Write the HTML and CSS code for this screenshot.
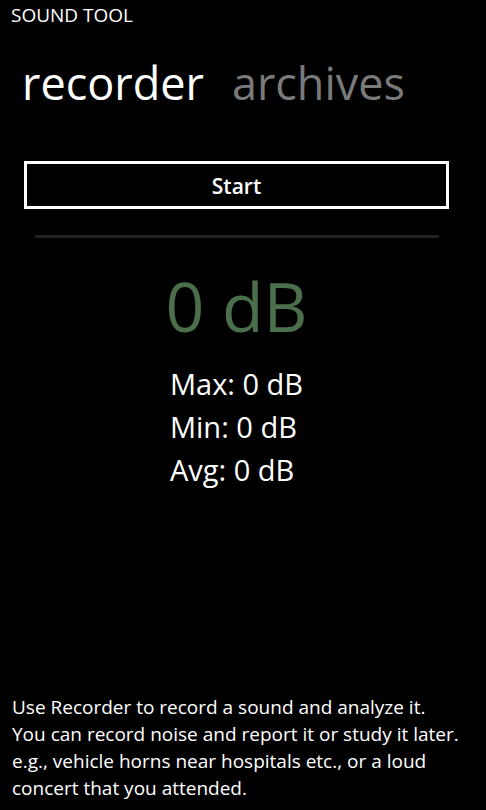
FILE: index.html
```html
<!DOCTYPE html>
<html lang="en">
<head>
    <meta charset="UTF-8">
    <meta name="viewport" content="width=device-width, initial-scale=1.0">
    <title>Sound Tool</title>
    <link rel="stylesheet" href="styles.css">
</head>
<body>
    <div class="app">
        <div class="titulo">SOUND TOOL</div>

        <!-- Pivot headers -->
        <div class="pivot">
            <span class="pivot-item activo">recorder</span>
            <span class="pivot-item">archives</span>
        </div>

        <div class="contenido">
            <button class="boton-start">Start</button>
            <div class="barra"></div>

            <div class="nivel">0 dB</div>

            <div class="estadisticas">
                <div>Max: 0 dB</div>
                <div>Min: 0 dB</div>
                <div>Avg: 0 dB</div>
            </div>
        </div>

        <p class="ayuda">Use Recorder to record a sound and analyze it.<br>
            You can record noise and report it or study it later.<br>
            e.g., vehicle horns near hospitals etc., or a loud<br>
            concert that you attended.</p>
    </div>
</body>
</html>
```

FILE: styles.css
```css
body {
    margin: 0;
    padding: 0;
    background-color: #000000;
    color: #ffffff;
    font-family: "Open Sans", "Noto Sans", sans-serif;
}

.app {
    height: 810px;
    display: flex;
    flex-direction: column;
    overflow: hidden;
}

.titulo {
    font-size: 19px;
    line-height: 28px;
    padding: 1px 0 0 11px;
}

.pivot {
    display: flex;
    gap: 28px;
    padding: 24px 0 0 22px;
    font-size: 45px;
    line-height: 60px;
    white-space: nowrap;
}

.pivot-item {
    color: #7a7a7a;
}

.pivot-item.activo {
    color: #ffffff;
}

.contenido {
    display: flex;
    flex-direction: column;
    align-items: center;
    padding: 48px 13px 0 0;
}

.boton-start {
    width: 425px;
    height: 48px;
    box-sizing: border-box;
    padding: 2px 0 0 0;
    background-color: transparent;
    color: #ffffff;
    border: 3px solid #ffffff;
    font-family: "Open Sans", "Noto Sans", sans-serif;
    font-size: 21px;
    font-weight: 600;
    cursor: pointer;
}

.barra {
    width: 404px;
    height: 3px;
    margin-top: 26px;
    background-color: #222222;
}

.nivel {
    margin-top: 23px;
    font-size: 68px;
    line-height: 90px;
    color: #4b6e4b;
}

.estadisticas {
    margin-top: 11px;
    font-size: 29px;
    line-height: 43px;
}

.ayuda {
    margin: auto 0 0 0;
    padding: 0 10px 8px 12px;
    font-size: 19px;
    line-height: 27px;
    white-space: nowrap;
}
```
